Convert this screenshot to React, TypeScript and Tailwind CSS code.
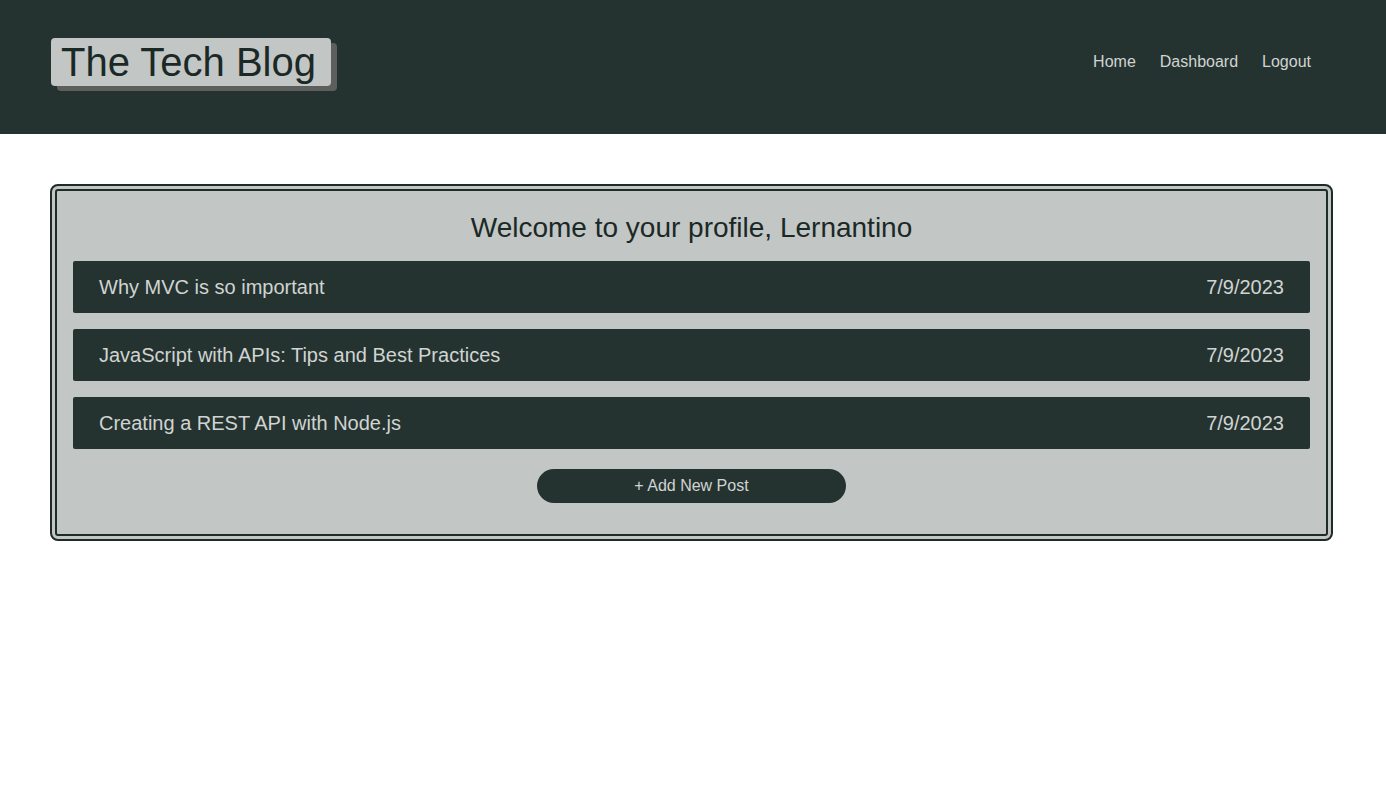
export default function App() {
  const posts = [
    { title: "Why MVC is so important", date: "7/9/2023" },
    { title: "JavaScript with APIs: Tips and Best Practices", date: "7/9/2023" },
    { title: "Creating a REST API with Node.js", date: "7/9/2023" },
  ]
  return (
    <div className="min-h-[793px] bg-white font-['Liberation_Sans',Arial,sans-serif]">
      <header className="h-[134px] bg-[#253330] flex items-start justify-between pl-[51px] pr-[75px]">
        <h1 className="mt-[38px] bg-[#c2c6c5] text-[#1b2926] text-[40px] leading-[48px] pl-[10px] pr-[15px] rounded-[4px] shadow-[6px_5px_0_#5c5f5c]">
          The Tech Blog
        </h1>
        <nav className="mt-[52px] flex gap-[24px] text-[16px] leading-[20px] text-[#d0d4d2]">
          <a href="#">Home</a>
          <a href="#">Dashboard</a>
          <a href="#">Logout</a>
        </nav>
      </header>
      <main className="pt-[50px]">
        <section className="ml-[50px] w-[1283px] border-[7px] border-double border-[#1e2b28] rounded-[8px] bg-[#c2c6c5] px-[16px] pt-[16px] pb-[31px]">
          <h2 className="text-center text-[28px] leading-[42px] text-[#1b2926] mb-[12px]">
            Welcome to your profile, Lernantino
          </h2>
          <div className="flex flex-col gap-[16px]">
            {posts.map((post) => (
              <div key={post.title} className="h-[52px] bg-[#253330] rounded-[2px] flex items-center justify-between px-[26px] text-[20px] text-[#d0d4d2]">
                <span>{post.title}</span>
                <span>{post.date}</span>
              </div>
            ))}
          </div>
          <div className="flex justify-center mt-[20px]">
            <button className="w-[309px] h-[34px] rounded-full bg-[#253330] text-[#d0d4d2] text-[16px]">
              + Add New Post
            </button>
          </div>
        </section>
      </main>
    </div>
  )
}
